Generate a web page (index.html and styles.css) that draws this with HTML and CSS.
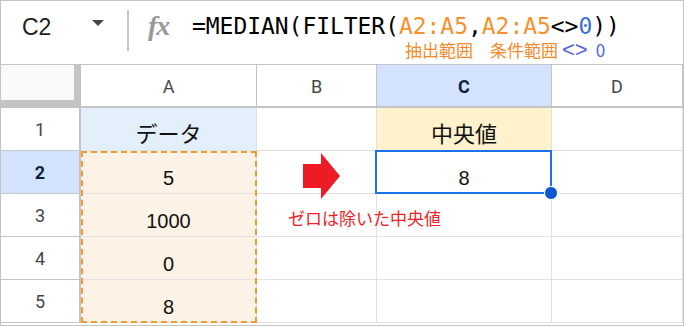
FILE: index.html
```html
<!DOCTYPE html>
<html lang="ja">

<head>
    <meta charset="UTF-8">
    <title>MEDIAN FILTER</title>
    <link rel="stylesheet" href="styles.css">
</head>

<body>
    <div class="sheet">
        <div class="fbar">
            <div class="namebox">
                <span class="ref">C2</span>
                <span class="caret"></span>
            </div>
            <div class="sep"></div>
            <div class="fx">fx</div>
            <div class="formula">
                <p class="code">=MEDIAN(FILTER(<span class="rng">A2:A5</span>,<span class="rng">A2:A5</span>&lt;&gt;<span class="num">0</span>))</p>
                <p class="note"><span class="o">抽出範囲</span><span class="o">条件範囲</span><span class="b"><span class="chev">&lt;&gt;</span>0</span></p>
            </div>
        </div>

        <div class="grid">
            <!-- header row -->
            <div class="corner"></div>
            <div class="colh">A</div>
            <div class="colh">B</div>
            <div class="colh sel">C</div>
            <div class="colh">D</div>

            <!-- row 1 -->
            <div class="rowh">1</div>
            <div class="cell jp head-blue">データ</div>
            <div class="cell"></div>
            <div class="cell jp head-yellow">中央値</div>
            <div class="cell"></div>

            <!-- row 2 -->
            <div class="rowh sel">2</div>
            <div class="cell data range-start">5
                <div class="range"></div>
            </div>
            <div class="cell arrow-cell">
                <svg class="arrow" width="38" height="47" viewBox="0 0 38 47">
                    <polygon points="0,11 18,11 18,0 37,23 18,46 18,35 0,35" fill="#ed1c24" />
                </svg>
            </div>
            <div class="cell num-cell active">8
                <div class="cursor"><span class="handle"></span></div>
            </div>
            <div class="cell"></div>

            <!-- row 3 -->
            <div class="rowh">3</div>
            <div class="cell data">1000</div>
            <div class="cell remark">ゼロは除いた中央値</div>
            <div class="cell"></div>
            <div class="cell"></div>

            <!-- row 4 -->
            <div class="rowh">4</div>
            <div class="cell data">0</div>
            <div class="cell"></div>
            <div class="cell"></div>
            <div class="cell"></div>

            <!-- row 5 -->
            <div class="rowh">5</div>
            <div class="cell data">8</div>
            <div class="cell"></div>
            <div class="cell"></div>
            <div class="cell"></div>
        </div>
    </div>
</body>

</html>
```

FILE: styles.css
```css
* {
    padding: 0;
    margin: 0;
    box-sizing: border-box;
}

body {
    font-family: "Liberation Sans", Arial, "Noto Sans CJK JP", sans-serif;
    color: #1f1f1f;
    background: #ffffff;
}

.sheet {
    width: 684px;
    height: 326px;
    border: 1px solid #c4c4c4;
    overflow: hidden;
}

/* formula bar */
.fbar {
    height: 64px;
    border-bottom: 1px solid #c4c4c4;
    display: flex;
    align-items: flex-start;
}

.namebox {
    width: 126px;
    height: 54px;
    display: flex;
    align-items: center;
    padding-left: 21px;
}

.ref {
    font-family: "Liberation Sans", Arial, sans-serif;
    font-size: 23px;
    color: #1f1f1f;
    width: 70px;
    line-height: 1;
    padding-bottom: 1px;
}

.caret {
    width: 0;
    height: 0;
    border-left: 6px solid transparent;
    border-right: 6px solid transparent;
    border-top: 6px solid #444746;
    margin-bottom: 10px;
}

.sep {
    width: 2px;
    height: 41px;
    margin-top: 9px;
    background: #c7c7c7;
}

.fx {
    width: 63px;
    padding-left: 19px;
    padding-top: 11px;
    font-family: "Liberation Serif", "Times New Roman", serif;
    font-style: italic;
    font-weight: bold;
    font-size: 28px;
    line-height: 1;
    color: #999999;
    letter-spacing: -1px;
}

.formula {
    padding-top: 14px;
}

.code {
    font-family: "DejaVu Sans Mono", "Liberation Mono", monospace;
    font-size: 23px;
    line-height: 23px;
    color: #000000;
    white-space: nowrap;
    letter-spacing: -0.05px;
}

.code .rng {
    color: #f5922f;
}

.code .num {
    color: #3c6fd8;
}

.note {
    font-family: "Noto Sans CJK JP", sans-serif;
    font-size: 17px;
    line-height: 18px;
    height: 18px;
    margin-top: 3px;
    padding-left: 213px;
    display: flex;
    align-items: center;
    gap: 17px;
    white-space: nowrap;
}

.note .o {
    color: #f5892a;
}

.note .b {
    color: #5163e0;
    margin-left: -13px;
    display: flex;
    align-items: center;
}

.chev {
    font-family: "Liberation Sans", Arial, sans-serif;
    font-size: 22px;
    line-height: 18px;
    margin-right: 8px;
}

/* grid */
.grid {
    display: grid;
    grid-template-columns: 80px 176px 120px 175px 131px;
    grid-template-rows: 43px repeat(5, 43px);
}

.corner {
    background: #f8f9fa;
    border-right: 7px solid #c4c4c4;
    border-bottom: 8px solid #c4c4c4;
}

.colh,
.rowh {
    display: flex;
    align-items: center;
    justify-content: center;
    font-family: Roboto, "Liberation Sans", sans-serif;
    font-size: 18px;
    color: #444746;
    background: #ffffff;
}

.colh {
    border-right: 1px solid #c4c4c4;
    border-bottom: 2px solid #c4c4c4;
    padding-top: 1px;
}

.rowh {
    border-right: 2px solid #c4c4c4;
    border-bottom: 1px solid #c4c4c4;
}

.colh.sel,
.rowh.sel {
    background: #d3e3fd;
    color: #0b1f44;
    font-weight: bold;
}

.cell {
    border-right: 1px solid #e1e1e1;
    border-bottom: 1px solid #e1e1e1;
    display: flex;
    align-items: flex-end;
    justify-content: center;
    font-size: 20px;
    line-height: 20px;
    padding-bottom: 5px;
    color: #111111;
}

.cell.jp {
    font-family: "Noto Sans CJK JP", sans-serif;
    font-size: 22px;
    line-height: 26px;
    padding-bottom: 5px;
}

.head-blue {
    background: #e3effb;
}

.head-yellow {
    background: #fff2cc;
}

.data {
    background: #fdf2e6;
}

.range-start,
.active {
    position: relative;
}

.range {
    position: absolute;
    top: 0;
    left: 0;
    width: 176px;
    height: 172px;
    border: 2px dashed #f29a2e;
}

.cursor {
    position: absolute;
    top: -1px;
    left: -2px;
    right: -1px;
    bottom: -1px;
    border: 2px solid #1a73e8;
}

.handle {
    position: absolute;
    right: -8px;
    bottom: -8px;
    width: 14px;
    height: 14px;
    border-radius: 50%;
    background: #0b57d0;
    border: 1px solid #ffffff;
}

.arrow-cell {
    align-items: flex-start;
    justify-content: flex-start;
    padding: 2px 0 0 46px;
}

.arrow {
    position: relative;
    z-index: 1;
    overflow: visible;
}

.remark {
    justify-content: flex-start;
    padding-left: 31px;
    padding-bottom: 8px;
    font-family: "Noto Sans CJK JP", sans-serif;
    font-size: 17px;
    color: #ee2228;
    white-space: nowrap;
    overflow: visible;
    position: relative;
    z-index: 1;
}
```
